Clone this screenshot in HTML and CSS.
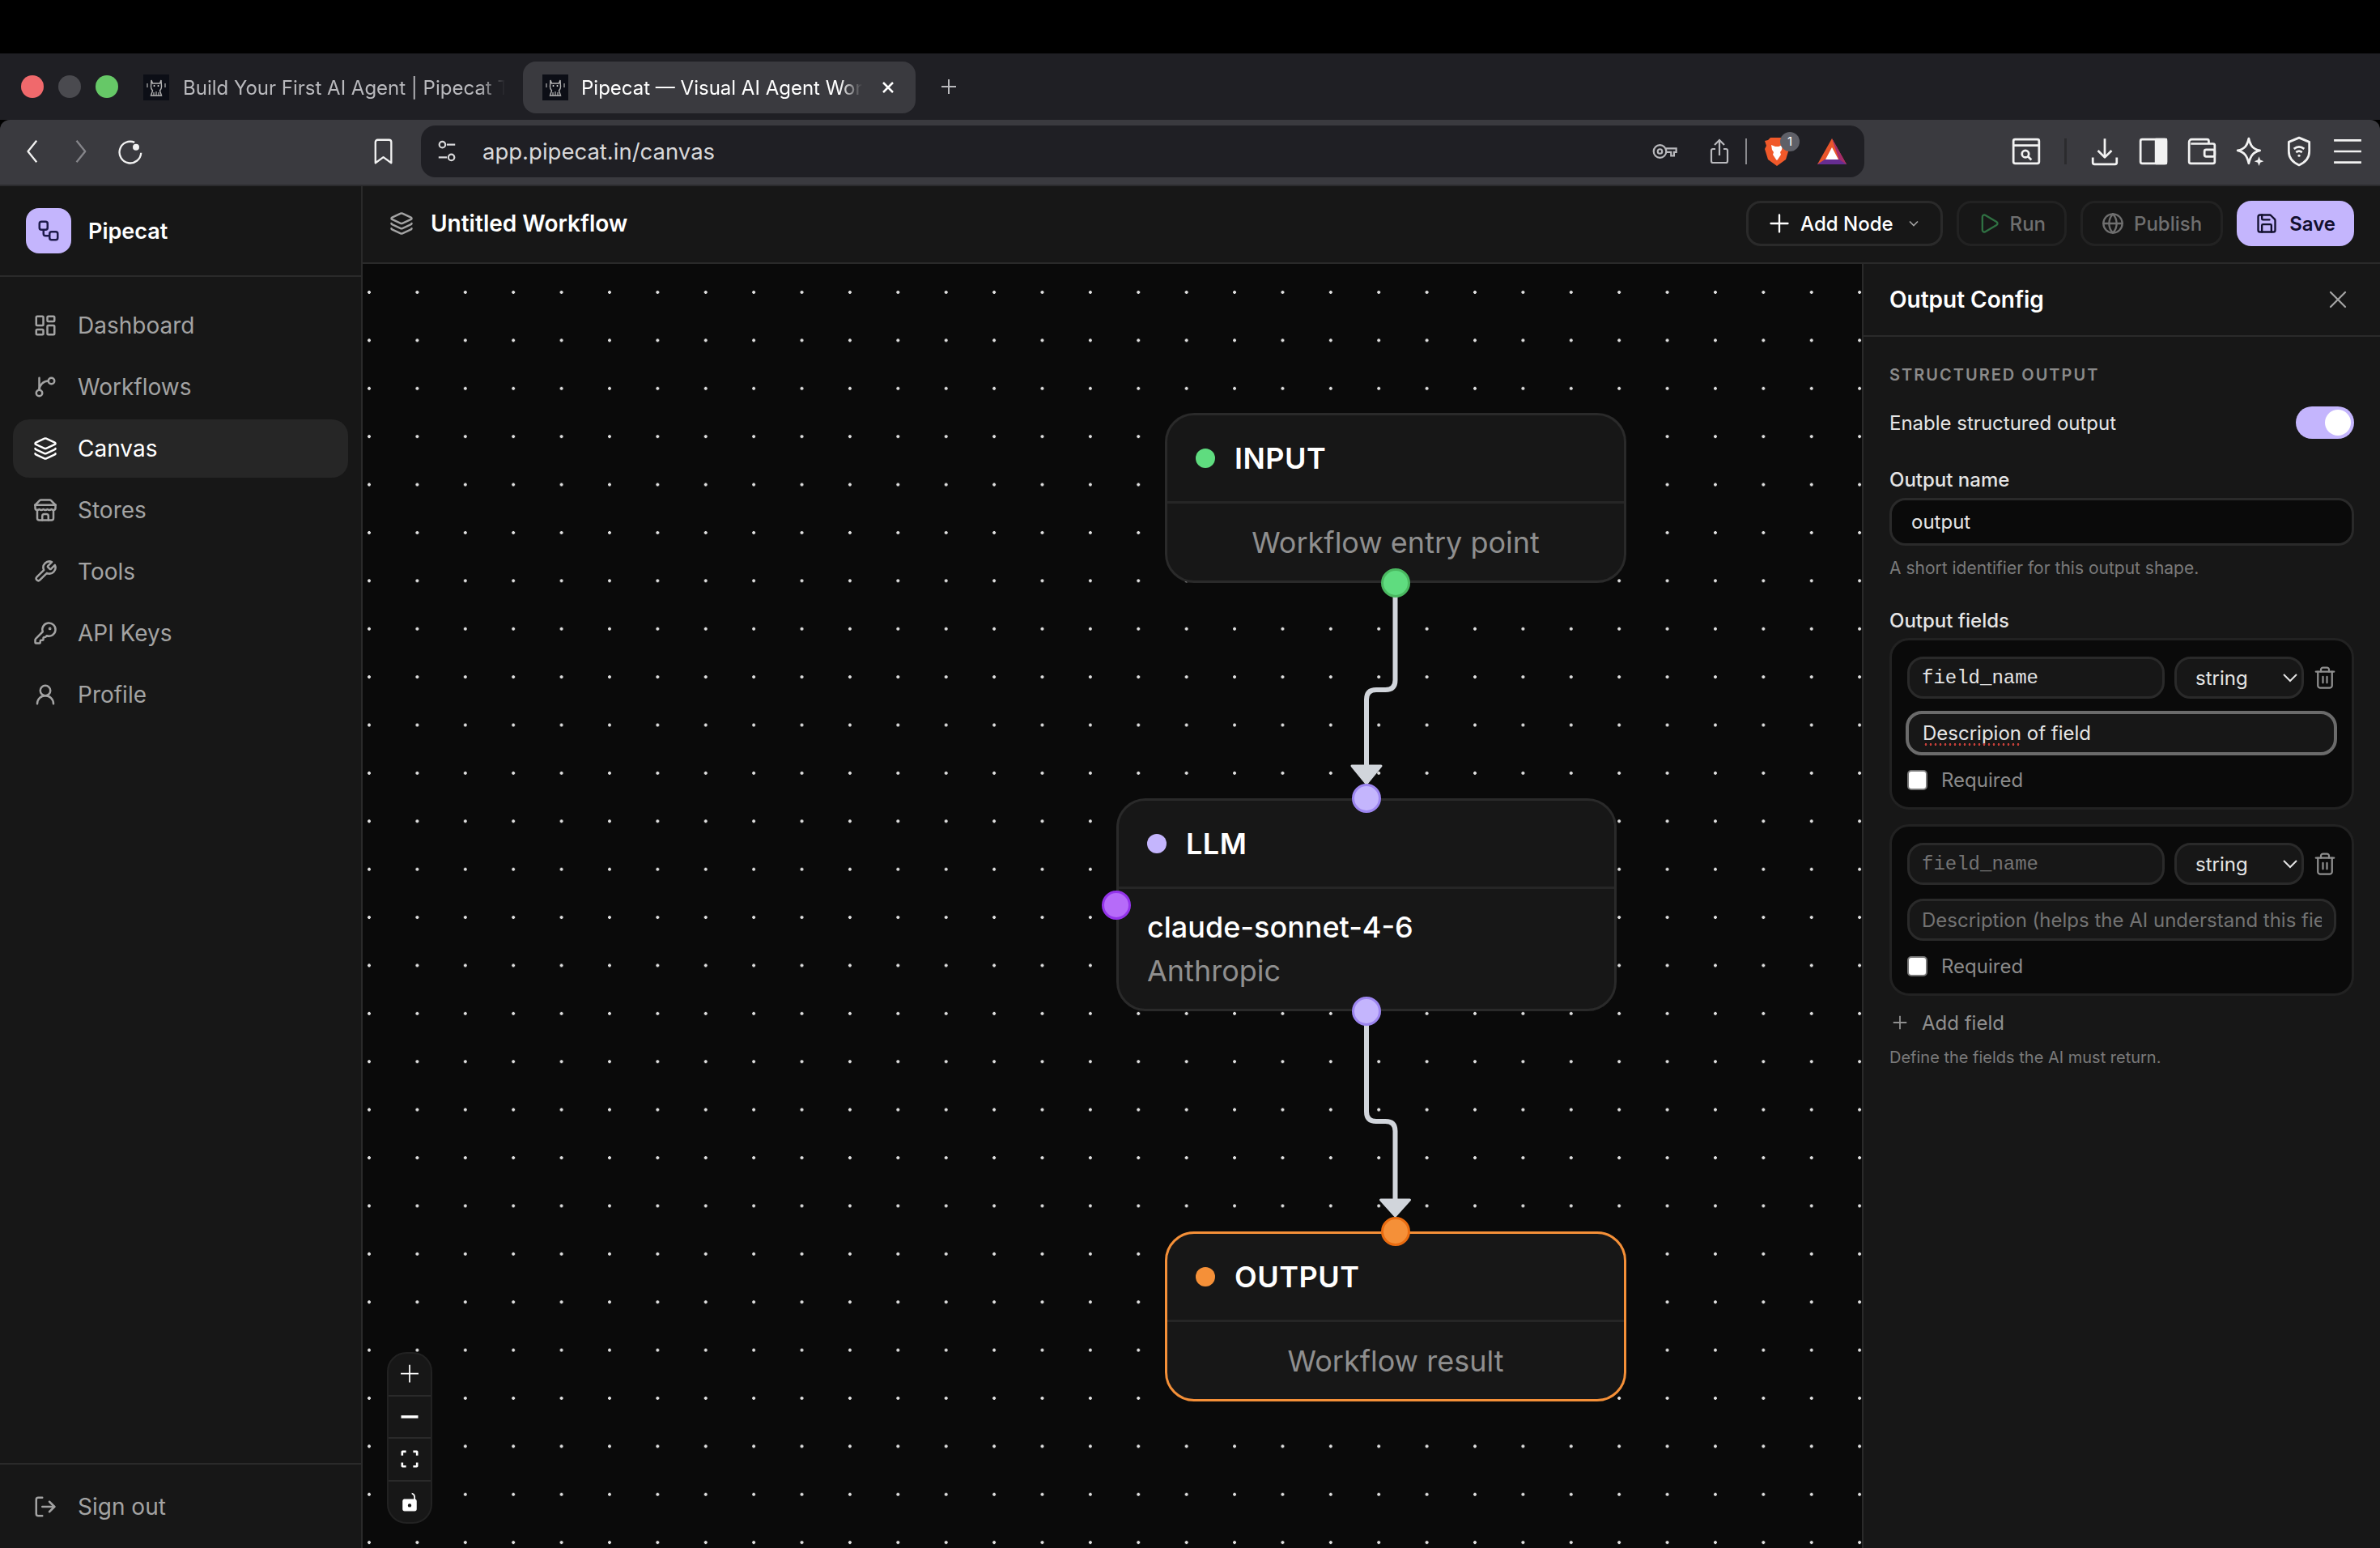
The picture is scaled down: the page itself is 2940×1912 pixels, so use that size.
FILE: index.html
```html
<!DOCTYPE html>
<html lang="en">
<head>
    <meta charset="UTF-8">
    <meta name="viewport" content="width=device-width, initial-scale=1.0">
    <title>Pipecat — Visual AI Agent Workflows</title>
    <link rel="stylesheet" href="styles.css">
</head>
<body>
    <div class="os-bar"></div>

    <div class="tabstrip">
        <div class="lights">
            <span class="light light-red"></span>
            <span class="light light-gray"></span>
            <span class="light light-green"></span>
        </div>
        <div class="tab">
            <svg class="favicon" viewBox="0 0 32 32"><rect width="32" height="32" fill="#0c0e16"/><path d="M10 7l1.500 4h9L22 7l.5 8c0 3-2 5-2 5l2 6h-13l2-6s-2-2-2-5z" fill="none" stroke="#b5b5b5" stroke-width="1.400"/><path d="M13 22v4M16 21v5M19 22v4M5 11v5M27 11v5" stroke="#b5b5b5" stroke-width="1.200"/><circle cx="13.500" cy="14" r="1" fill="#ddd"/><circle cx="18.500" cy="14" r="1" fill="#ddd"/></svg>
            <span class="tab-title tab-title-first">Build Your First AI Agent | Pipecat T</span>
        </div>
        <div class="tab tab-active">
            <svg class="favicon" viewBox="0 0 32 32"><rect width="32" height="32" fill="#0c0e16"/><path d="M10 7l1.500 4h9L22 7l.5 8c0 3-2 5-2 5l2 6h-13l2-6s-2-2-2-5z" fill="none" stroke="#b5b5b5" stroke-width="1.400"/><path d="M13 22v4M16 21v5M19 22v4M5 11v5M27 11v5" stroke="#b5b5b5" stroke-width="1.200"/><circle cx="13.500" cy="14" r="1" fill="#ddd"/><circle cx="18.500" cy="14" r="1" fill="#ddd"/></svg>
            <span class="tab-title tab-title-active">Pipecat — Visual AI Agent Wor</span>
            <svg class="tab-close" viewBox="0 0 20 20"><path d="M4 4l12 12M16 4L4 16"/></svg>
        </div>
        <svg class="new-tab" viewBox="0 0 24 24"><path d="M12 3v18M3 12h18"/></svg>
    </div>

    <div class="toolbar">
        <div class="tool-group">
            <button class="tool-btn"><svg viewBox="0 0 20 36"><path d="M16 3L4 18l12 15"/></svg></button>
            <button class="tool-btn tool-dim"><svg viewBox="0 0 20 36"><path d="M4 3l12 15L4 33"/></svg></button>
            <button class="tool-btn"><svg viewBox="0 0 36 36"><path d="M25 5.500a15 15 0 1 0 9 14.500"/><circle cx="27" cy="12" r="4.500" fill="#f2f2f2" stroke="none"/></svg></button>
            <button class="tool-btn tool-bookmark"><svg viewBox="0 0 26 36"><path d="M2 5a3 3 0 0 1 3-3h16a3 3 0 0 1 3 3v29l-11-8-11 8z"/></svg></button>
        </div>
        <div class="urlbar">
            <svg class="site-icon" viewBox="0 0 28 32"><circle cx="8" cy="7" r="4"/><path d="M14 7h11M3 24h11"/><circle cx="20" cy="24" r="4"/></svg>
            <span class="url">app.pipecat.in/canvas</span>
            <div class="url-icons">
                <svg class="icon-key" viewBox="0 0 34 24"><circle cx="11" cy="12" r="8.500"/><circle cx="11" cy="12" r="3"/><path d="M19 8h14v5h-3v5h-4v-5h-7"/></svg>
                <svg class="icon-share" viewBox="0 0 24 32"><path d="M12 21V2M6 8l6-6 6 6M7 13H4a2 2 0 0 0-2 2v13a2 2 0 0 0 2 2h16a2 2 0 0 0 2-2V15a2 2 0 0 0-2-2h-3"/></svg>
                <span class="url-sep"></span>
                <span class="brave">
                    <svg viewBox="0 0 32 36"><path d="M8 1h16l3 3 4 1-2 6 2 4-4 13-11 8-11-8L1 15l2-4-2-6 4-1z" fill="#f0592a"/><path d="M9 10l5 2h4l5-2-1 6-2 3 1 3-4 6-1 1-1-1-4-6 1-3-2-3z" fill="#fff"/></svg>
                    <span class="brave-badge">1</span>
                </span>
                <svg class="icon-bat" viewBox="0 0 36 32"><path d="M18 0L0 32h36z" fill="#e9562c"/><path d="M18 0l18 32-9-5z" fill="#a32b6c"/><path d="M0 32l9-6h18l9 6z" fill="#662d91"/><path d="M18 11l-8 15h16z" fill="#fff"/></svg>
            </div>
        </div>
        <div class="tool-group tool-right">
            <button class="tool-btn"><svg viewBox="0 0 36 36"><rect x="3" y="4" width="30" height="28" rx="2"/><path d="M3 11h30"/><circle cx="17" cy="21" r="4"/><path d="M20 24l4 4"/></svg></button>
            <span class="tool-sep"></span>
            <button class="tool-btn"><svg viewBox="0 0 36 36"><path d="M18 3v22M10 17l8 8 8-8M4 25v6a2 2 0 0 0 2 2h24a2 2 0 0 0 2-2v-6"/></svg></button>
            <button class="tool-btn"><svg viewBox="0 0 36 36"><rect x="3" y="4" width="30" height="28" rx="2"/><rect x="21" y="4" width="12" height="28" fill="#f2f2f2"/></svg></button>
            <button class="tool-btn"><svg viewBox="0 0 36 36"><path d="M26 9V6a2 2 0 0 0-2-2H6a3 3 0 0 0-3 3v23a2 2 0 0 0 2 2h26a2 2 0 0 0 2-2V11a2 2 0 0 0-2-2H5"/><rect x="21" y="16" width="12" height="8" rx="2"/></svg></button>
            <button class="tool-btn"><svg viewBox="0 0 36 36"><path d="M16 3c2 9 5 12 13 14-8 2-11 6-13 15-2-9-5-13-13-15 8-2 11-5 13-14z"/><path d="M28 24l1.500 4 4 1.500-4 1.500-1.500 4-1.500-4-4-1.500 4-1.500z" fill="#f2f2f2" stroke="none"/></svg></button>
            <button class="tool-btn"><svg viewBox="0 0 36 36"><path d="M18 2l12 5v11c0 8-5 13-12 16C11 31 6 26 6 18V7z"/><path d="M12 15c4-3 8-3 12 0M14.500 19c2-1.500 5-1.500 7 0"/><circle cx="18" cy="23" r="1.500" fill="#f2f2f2" stroke="none"/></svg></button>
            <button class="tool-btn"><svg viewBox="0 0 36 36"><path d="M2 5h32M2 18h32M2 31h32"/></svg></button>
        </div>
    </div>

    <div class="app">
        <aside class="sidebar">
            <div class="brand">
                <span class="brand-logo">
                    <svg viewBox="0 0 24 24"><rect x="3" y="3" width="8" height="8" rx="2"/><path d="M7 11v4a2 2 0 0 0 2 2h4"/><rect x="13" y="13" width="8" height="8" rx="2"/></svg>
                </span>
                <span class="brand-name">Pipecat</span>
            </div>
            <nav class="nav">
                <a class="nav-item">
                    <svg class="icon" viewBox="0 0 24 24"><rect x="3" y="3" width="7" height="9" rx="1"/><rect x="14" y="3" width="7" height="5" rx="1"/><rect x="14" y="12" width="7" height="9" rx="1"/><rect x="3" y="16" width="7" height="5" rx="1"/></svg>
                    Dashboard
                </a>
                <a class="nav-item">
                    <svg class="icon" viewBox="0 0 24 24"><path d="M6 3v12"/><circle cx="18" cy="6" r="3"/><circle cx="6" cy="18" r="3"/><path d="M15 6a9 9 0 0 0-9 9"/></svg>
                    Workflows
                </a>
                <a class="nav-item nav-active">
                    <svg class="icon" viewBox="0 0 24 24"><path d="M12.830 2.180a2 2 0 0 0-1.660 0L2.600 6.080a1 1 0 0 0 0 1.830l8.580 3.910a2 2 0 0 0 1.660 0l8.580-3.900a1 1 0 0 0 0-1.830z"/><path d="M2 12a1 1 0 0 0 .58.91l8.600 3.910a2 2 0 0 0 1.650 0l8.580-3.900A1 1 0 0 0 22 12"/><path d="M2 17a1 1 0 0 0 .58.91l8.600 3.910a2 2 0 0 0 1.650 0l8.580-3.900A1 1 0 0 0 22 17"/></svg>
                    Canvas
                </a>
                <a class="nav-item">
                    <svg class="icon" viewBox="0 0 24 24"><path d="m2 7 4.410-4.410A2 2 0 0 1 7.830 2h8.340a2 2 0 0 1 1.420.59L22 7"/><path d="M4 12v8a2 2 0 0 0 2 2h12a2 2 0 0 0 2-2v-8"/><path d="M15 22v-4a2 2 0 0 0-2-2h-2a2 2 0 0 0-2 2v4"/><path d="M2 7h20"/><path d="M22 7v3a2 2 0 0 1-2 2a2.700 2.700 0 0 1-1.590-.63.7.7 0 0 0-.82 0A2.700 2.700 0 0 1 16 12a2.700 2.700 0 0 1-1.590-.63.7.7 0 0 0-.82 0A2.700 2.700 0 0 1 12 12a2.700 2.700 0 0 1-1.590-.63.7.7 0 0 0-.82 0A2.700 2.700 0 0 1 8 12a2.700 2.700 0 0 1-1.590-.63.7.7 0 0 0-.82 0A2.700 2.700 0 0 1 4 12a2 2 0 0 1-2-2V7"/></svg>
                    Stores
                </a>
                <a class="nav-item">
                    <svg class="icon" viewBox="0 0 24 24"><path d="M14.700 6.300a1 1 0 0 0 0 1.400l1.600 1.600a1 1 0 0 0 1.400 0l3.770-3.770a6 6 0 0 1-7.940 7.940l-6.910 6.910a2.120 2.120 0 0 1-3-3l6.910-6.910a6 6 0 0 1 7.940-7.940l-3.760 3.760z"/></svg>
                    Tools
                </a>
                <a class="nav-item">
                    <svg class="icon" viewBox="0 0 24 24"><path d="M2.586 17.414A2 2 0 0 0 2 18.828V21a1 1 0 0 0 1 1h3a1 1 0 0 0 1-1v-1a1 1 0 0 1 1-1h1a1 1 0 0 0 1-1v-1a1 1 0 0 1 1-1h.172a2 2 0 0 0 1.414-.586l.814-.814a6.500 6.500 0 1 0-4-4z"/><circle cx="16.500" cy="7.500" r=".5" fill="currentColor"/></svg>
                    API Keys
                </a>
                <a class="nav-item">
                    <svg class="icon" viewBox="0 0 24 24"><circle cx="12" cy="8" r="5"/><path d="M20 21a8 8 0 0 0-16 0"/></svg>
                    Profile
                </a>
            </nav>
            <div class="signout">
                <a class="nav-item">
                    <svg class="icon" viewBox="0 0 24 24"><path d="M9 21H5a2 2 0 0 1-2-2V5a2 2 0 0 1 2-2h4"/><path d="m16 17 5-5-5-5"/><path d="M21 12H9"/></svg>
                    Sign out
                </a>
            </div>
        </aside>

        <main class="main">
            <header class="topbar">
                <svg class="icon topbar-icon" viewBox="0 0 24 24"><path d="M12.830 2.180a2 2 0 0 0-1.660 0L2.600 6.080a1 1 0 0 0 0 1.830l8.580 3.910a2 2 0 0 0 1.660 0l8.580-3.900a1 1 0 0 0 0-1.830z"/><path d="M2 12a1 1 0 0 0 .58.91l8.600 3.910a2 2 0 0 0 1.650 0l8.580-3.900A1 1 0 0 0 22 12"/><path d="M2 17a1 1 0 0 0 .58.91l8.600 3.910a2 2 0 0 0 1.650 0l8.580-3.900A1 1 0 0 0 22 17"/></svg>
                <h1 class="workflow-name">Untitled Workflow</h1>
                <div class="actions">
                    <button class="btn btn-add">
                        <svg class="btn-icon" viewBox="0 0 24 24"><path d="M12 3v18M3 12h18"/></svg>
                        Add Node
                        <svg class="btn-caret" viewBox="0 0 24 24"><path d="m6 9 6 6 6-6"/></svg>
                    </button>
                    <button class="btn btn-off">
                        <svg class="btn-icon btn-play" viewBox="0 0 24 24"><path d="M5 5a2 2 0 0 1 3.008-1.728l11.997 6.998a2 2 0 0 1 .003 3.458l-12 7A2 2 0 0 1 5 19z"/></svg>
                        Run
                    </button>
                    <button class="btn btn-off">
                        <svg class="btn-icon" viewBox="0 0 24 24"><circle cx="12" cy="12" r="10"/><path d="M12 2a14.500 14.500 0 0 0 0 20 14.500 14.500 0 0 0 0-20"/><path d="M2 12h20"/></svg>
                        Publish
                    </button>
                    <button class="btn btn-save">
                        <svg class="btn-icon" viewBox="0 0 24 24"><path d="M15.200 3a2 2 0 0 1 1.400.6l3.800 3.800a2 2 0 0 1 .6 1.400V19a2 2 0 0 1-2 2H5a2 2 0 0 1-2-2V5a2 2 0 0 1 2-2z"/><path d="M17 21v-7a1 1 0 0 0-1-1H8a1 1 0 0 0-1 1v7"/><path d="M7 3v4a1 1 0 0 0 1 1h7"/></svg>
                        Save
                    </button>
                </div>
            </header>

            <div class="workspace">
                <section class="canvas">
                    <svg class="wires" viewBox="0 0 1850 1586">
                        <path class="wire" d="M1275.500 394V514Q1275.500 526 1263.500 526H1252Q1240 526 1240 538V622"/>
                        <path class="arrow" d="M1222 620H1258L1240 642Z"/>
                        <path class="wire" d="M1240 924V1047Q1240 1059 1252 1059H1263.500Q1275.500 1059 1275.500 1071V1158"/>
                        <path class="arrow" d="M1257.500 1156H1293.500L1275.500 1176Z"/>
                    </svg>

                    <div class="node node-input">
                        <div class="node-head"><span class="node-dot dot-green"></span>INPUT</div>
                        <div class="node-body node-center">Workflow entry point</div>
                        <span class="handle handle-bottom handle-green"></span>
                    </div>

                    <div class="node node-llm">
                        <span class="handle handle-top handle-violet"></span>
                        <span class="handle handle-left handle-purple"></span>
                        <div class="node-head"><span class="node-dot dot-violet"></span>LLM</div>
                        <div class="node-body">
                            <div class="model">claude-sonnet-4-6</div>
                            <div>Anthropic</div>
                        </div>
                        <span class="handle handle-bottom handle-violet"></span>
                    </div>

                    <div class="node node-output">
                        <span class="handle handle-top handle-orange"></span>
                        <div class="node-head"><span class="node-dot dot-orange"></span>OUTPUT</div>
                        <div class="node-body node-center">Workflow result</div>
                    </div>

                    <div class="controls">
                        <button class="control"><svg viewBox="0 0 32 32"><path d="M15 3h2v11.500h11.500v2H17V28h-2V16.500H3.500v-2H15z"/></svg></button>
                        <button class="control"><svg viewBox="0 0 32 32"><path d="M4 14h24v4H4z"/></svg></button>
                        <button class="control"><svg viewBox="0 0 32 32"><path d="M4 11V6a2 2 0 0 1 2-2h5v3H7v4zM21 4h5a2 2 0 0 1 2 2v5h-3V7h-4zM28 21v5a2 2 0 0 1-2 2h-5v-3h4v-4zM11 28H6a2 2 0 0 1-2-2v-5h3v4h4z"/></svg></button>
                        <button class="control"><svg viewBox="0 0 32 32"><path fill-rule="evenodd" d="M8 12h14V9a4 4 0 0 0-3-3.800V3a6.500 6.500 0 0 1 5 6v3a3 3 0 0 1 2 3v11a3 3 0 0 1-3 3H9a3 3 0 0 1-3-3V15a3 3 0 0 1 2-3zm8 6.500a2.500 2.500 0 1 0 0 5 2.500 2.500 0 0 0 0-5z"/></svg></button>
                    </div>
                </section>

                <aside class="panel">
                    <div class="panel-head">
                        <h2 class="panel-title">Output Config</h2>
                        <svg class="panel-close" viewBox="0 0 24 24"><path d="M18 6 6 18M6 6l12 12"/></svg>
                    </div>
                    <div class="panel-body">
                        <div class="eyebrow">STRUCTURED OUTPUT</div>
                        <div class="switch-row">
                            <span>Enable structured output</span>
                            <span class="switch"><span class="switch-knob"></span></span>
                        </div>

                        <label class="label label-name" for="outputName">Output name</label>
                        <input class="input" id="outputName" type="text" value="output">
                        <p class="help help-name">A short identifier for this output shape.</p>

                        <div class="label label-fields">Output fields</div>

                        <div class="field-card">
                            <div class="field-row">
                                <input class="field-input mono" type="text" value="field_name" placeholder="field_name">
                                <span class="select-wrap">
                                    <select class="field-select"><option>string</option></select>
                                    <svg class="select-caret" viewBox="0 0 24 24"><path d="m4 8 8 8 8-8"/></svg>
                                </span>
                                <svg class="trash" viewBox="0 0 24 24"><path d="M3 6h18"/><path d="M19 6v14c0 1-1 2-2 2H7c-1 0-2-1-2-2V6"/><path d="M8 6V4c0-1 1-2 2-2h4c1 0 2 1 2 2v2"/><path d="M10 11v6M14 11v6"/></svg>
                            </div>
                            <div class="desc-wrap">
                                <input class="field-input desc desc-focus" type="text" value="Descripion of field">
                                <span class="spell"></span>
                            </div>
                            <label class="check"><input type="checkbox"> Required</label>
                        </div>

                        <div class="field-card">
                            <div class="field-row">
                                <input class="field-input mono" type="text" placeholder="field_name">
                                <span class="select-wrap">
                                    <select class="field-select"><option>string</option></select>
                                    <svg class="select-caret" viewBox="0 0 24 24"><path d="m4 8 8 8 8-8"/></svg>
                                </span>
                                <svg class="trash" viewBox="0 0 24 24"><path d="M3 6h18"/><path d="M19 6v14c0 1-1 2-2 2H7c-1 0-2-1-2-2V6"/><path d="M8 6V4c0-1 1-2 2-2h4c1 0 2 1 2 2v2"/><path d="M10 11v6M14 11v6"/></svg>
                            </div>
                            <div class="desc-wrap">
                                <input class="field-input desc" type="text" placeholder="Description (helps the AI understand this field)">
                            </div>
                            <label class="check"><input type="checkbox"> Required</label>
                        </div>

                        <button class="add-field">
                            <svg viewBox="0 0 24 24"><path d="M12 3v18M3 12h18"/></svg>
                            Add field
                        </button>
                        <p class="help help-fields">Define the fields the AI must return.</p>
                    </div>
                </aside>
            </div>
        </main>
    </div>
</body>
</html>
```

FILE: styles.css
```css
* {
    box-sizing: border-box;
}
html, body {
    height: 100%;
}
body {
    margin: 0;
    display: flex;
    flex-direction: column;
    overflow: hidden;
    background-color: black;
    color: white;
    font-family: Inter, "Noto Sans", sans-serif;
}
button, input, select {
    font-family: inherit;
}
svg {
    display: block;
    flex: none;
}

/* browser chrome */
.os-bar {
    height: 66px;
    background-color: black;
}
.tabstrip {
    height: 82px;
    display: flex;
    align-items: center;
    padding-left: 26px;
    background-color: #1f1f24;
}
.lights {
    display: flex;
    gap: 18px;
    width: 151px;
}
.light {
    width: 28px;
    height: 28px;
    border-radius: 50%;
}
.light-red { background-color: #f0696c; }
.light-gray { background-color: #4a4a4f; }
.light-green { background-color: #66c867; }
.tab {
    height: 64px;
    display: flex;
    align-items: center;
    gap: 17px;
    margin-top: 2px;
    color: #b9b9bd;
    font-size: 24px;
}
.tab-active {
    width: 485px;
    gap: 16px;
    margin-left: 22px;
    padding: 0 24px;
    border-radius: 16px;
    background-color: #3a3a3f;
    color: white;
}
.favicon {
    width: 32px;
    height: 32px;
}
.tab-title {
    white-space: nowrap;
    -webkit-mask-image: linear-gradient(to right, black 92%, transparent);
    mask-image: linear-gradient(to right, black 92%, transparent);
}
.tab-title-first { width: 398px; }
.tab-title-active { width: 347px; }
.tab-close {
    width: 20px;
    height: 20px;
    margin-left: 6px;
    fill: none;
    stroke: white;
    stroke-width: 2.5;
}
.new-tab {
    width: 24px;
    height: 24px;
    margin-left: 29px;
    fill: none;
    stroke: #b9b9bd;
    stroke-width: 2;
}
.toolbar {
    height: 82px;
    display: flex;
    align-items: center;
    padding: 0 10px 2px;
    border-radius: 12px 12px 0 0;
    border-bottom: 2px solid #2b2b2e;
    background-color: #3a3a3f;
}
.tool-group {
    display: flex;
    align-items: center;
}
.tool-right {
    margin-left: auto;
}
.tool-btn {
    width: 60px;
    height: 60px;
    display: flex;
    align-items: center;
    justify-content: center;
    padding: 0;
    border: none;
    background: none;
}
.tool-btn svg {
    height: 32px;
    fill: none;
    stroke: #f2f2f2;
    stroke-width: 2.6;
    stroke-linejoin: round;
}
.tool-right .tool-btn svg {
    height: 38px;
}
.tool-dim svg {
    stroke: #85858a;
}
.tool-bookmark {
    margin-left: 254px;
    margin-right: 16px;
}
.urlbar {
    width: 1783px;
    height: 64px;
    display: flex;
    align-items: center;
    border-radius: 18px;
    background-color: #1f1f24;
}
.site-icon {
    width: 26px;
    height: 30px;
    margin-left: 19px;
    fill: none;
    stroke: #d8d8da;
    stroke-width: 2.4;
}
.url {
    margin-left: 31px;
    color: #d8d8da;
    font-size: 27.5px;
}
.url-icons {
    display: flex;
    align-items: center;
    margin-left: auto;
    margin-right: 22px;
}
.icon-key {
    width: 32px;
    height: 22px;
    fill: none;
    stroke: #b9b9bd;
    stroke-width: 2.4;
}
.icon-share {
    width: 24px;
    height: 32px;
    margin-left: 40px;
    fill: none;
    stroke: #b9b9bd;
    stroke-width: 2.2;
}
.url-sep {
    width: 2px;
    height: 32px;
    margin-left: 20px;
    background-color: #8a8a8e;
}
.brave {
    position: relative;
    margin-left: 21px;
    width: 32px;
}
.brave svg {
    width: 32px;
    height: 36px;
}
.brave-badge {
    position: absolute;
    top: -6px;
    left: 20px;
    width: 24px;
    height: 24px;
    border-radius: 12px;
    background-color: #5f6068;
    font-size: 15px;
    line-height: 24px;
    text-align: center;
}
.icon-bat {
    width: 36px;
    height: 32px;
    margin-left: 34px;
}
.tool-sep {
    width: 3px;
    height: 32px;
    margin: 0 17px;
    background-color: #2b2b2e;
}

/* app shell */
.app {
    flex: 1;
    display: flex;
    min-height: 0;
    background-color: #171717;
}
.sidebar {
    width: 448px;
    display: flex;
    flex-direction: column;
    border-right: 2px solid #2a2a2a;
}
.brand {
    height: 112px;
    display: flex;
    align-items: center;
    gap: 21px;
    padding-left: 32px;
    border-bottom: 2px solid #2a2a2a;
}
.brand-logo {
    width: 56px;
    height: 56px;
    display: flex;
    align-items: center;
    justify-content: center;
    border-radius: 16px;
    background-color: #c4b5fd;
}
.brand-logo svg {
    width: 30px;
    height: 30px;
    fill: none;
    stroke: #1e1b4b;
    stroke-width: 2;
}
.brand-name {
    font-size: 27px;
    font-weight: 600;
}
.nav {
    flex: 1;
    display: flex;
    flex-direction: column;
    gap: 4px;
    padding: 24px 16px 0;
}
.nav-item {
    height: 72px;
    display: flex;
    align-items: center;
    gap: 25px;
    padding-left: 25px;
    border-radius: 20px;
    color: #a3a3a3;
    font-size: 28px;
}
.nav-active {
    background-color: #262626;
    color: white;
}
.icon {
    width: 30px;
    height: 30px;
    fill: none;
    stroke: currentColor;
    stroke-width: 2;
    stroke-linecap: round;
    stroke-linejoin: round;
}
.signout {
    height: 105px;
    padding: 16px 16px 0;
    border-top: 2px solid #2a2a2a;
}

/* main */
.main {
    flex: 1;
    min-width: 0;
    display: flex;
    flex-direction: column;
}
.topbar {
    height: 96px;
    display: flex;
    align-items: center;
    padding: 0 32px 0 33px;
    border-bottom: 2px solid #2a2a2a;
}
.topbar-icon {
    color: #a3a3a3;
    margin-top: -2px;
}
.workflow-name {
    margin: -2px 0 0 21px;
    font-size: 28px;
    font-weight: 600;
}
.actions {
    display: flex;
    gap: 17px;
    margin-left: auto;
    margin-top: -2px;
}
.btn {
    height: 56px;
    display: flex;
    align-items: center;
    gap: 12px;
    padding: 0 23px;
    border: 3px solid #2a2a2a;
    border-radius: 18px;
    background-color: #171717;
    color: white;
    font-size: 24px;
    font-weight: 500;
}
.btn-add {
    padding-left: 24px;
}
.btn-icon {
    width: 28px;
    height: 28px;
    fill: none;
    stroke: currentColor;
    stroke-width: 2;
    stroke-linecap: round;
    stroke-linejoin: round;
}
.btn-caret {
    width: 20px;
    height: 20px;
    margin-left: 3px;
    fill: none;
    stroke: #a3a3a3;
    stroke-width: 2;
}
.btn-off {
    border-color: #222222;
    color: #6f6f6f;
}
.btn-play {
    stroke: #2f7042;
}
.btn-save {
    gap: 14px;
    border: none;
    padding: 0 23px;
    background-color: #c4b5fd;
    color: #12102e;
    font-weight: 600;
}

.workspace {
    flex: 1;
    min-height: 0;
    display: flex;
}

/* canvas */
.canvas {
    position: relative;
    flex: 1;
    overflow: hidden;
    background-color: #0a0a0a;
    background-image: radial-gradient(circle, #e0e0e0 1.6px, transparent 2.2px);
    background-size: 59.4px 59.4px;
    background-position: -21.7px 5.3px;
}
.wires {
    position: absolute;
    top: 0;
    left: 0;
    width: 1850px;
    height: 1586px;
}
.wire {
    fill: none;
    stroke: #d1d5db;
    stroke-width: 6;
}
.arrow {
    fill: #d1d5db;
    stroke: #d1d5db;
    stroke-width: 3;
    stroke-linejoin: round;
}
.node {
    position: absolute;
    display: flex;
    flex-direction: column;
    border: 3px solid #2a2a2a;
    border-radius: 36px;
    background-color: #171717;
}
.node-input {
    left: 991px;
    top: 184px;
    width: 570px;
    height: 210px;
}
.node-llm {
    left: 931px;
    top: 660px;
    width: 618px;
    height: 263px;
}
.node-output {
    left: 991px;
    top: 1195px;
    width: 570px;
    height: 210px;
    border-color: #f59038;
}
.node-head {
    height: 109px;
    display: flex;
    align-items: center;
    gap: 24px;
    padding-left: 35px;
    border-bottom: 3px solid #262626;
    font-size: 36px;
    font-weight: 600;
    letter-spacing: 0.5px;
}
.node-dot {
    width: 24px;
    height: 24px;
    border-radius: 50%;
}
.dot-green { background-color: #5fdc7f; }
.dot-violet { background-color: #c4b5fd; }
.dot-orange { background-color: #f59038; }
.node-body {
    flex: 1;
    display: flex;
    flex-direction: column;
    justify-content: center;
    gap: 10px;
    padding: 0 35px;
    color: #8f8f8f;
    font-size: 36px;
}
.node-center {
    text-align: center;
}
.model {
    color: white;
    font-weight: 500;
}
.handle {
    position: absolute;
    width: 36px;
    height: 36px;
    border: 3px solid;
    border-radius: 50%;
}
.handle-top {
    top: -21px;
    left: calc(50% - 18px);
}
.handle-bottom {
    bottom: -21px;
    left: calc(50% - 18px);
}
.handle-left {
    top: calc(50% - 18px);
    left: -21px;
}
.handle-green {
    background-color: #5fdc7f;
    border-color: #4ab860;
}
.handle-violet {
    background-color: #c4b5fd;
    border-color: #9d86f0;
}
.handle-purple {
    background-color: #b66bf9;
    border-color: #9333ea;
}
.handle-orange {
    background-color: #f59038;
    border-color: #ea6c10;
}
.controls {
    position: absolute;
    left: 30px;
    bottom: 30px;
    width: 56px;
    height: 212px;
    display: flex;
    flex-direction: column;
    overflow: hidden;
    border: 2px solid #222222;
    border-radius: 24px;
    background-color: #171717;
}
.control {
    flex: 1;
    display: flex;
    align-items: center;
    justify-content: center;
    padding: 0;
    border: none;
    border-bottom: 2px solid #2a2a2a;
    background: none;
}
.control:last-child {
    border-bottom: none;
}
.control svg {
    width: 28px;
    height: 28px;
    fill: white;
}

/* config panel */
.panel {
    width: 640px;
    border-left: 2px solid #2a2a2a;
}
.panel-head {
    height: 90px;
    display: flex;
    align-items: center;
    justify-content: space-between;
    padding: 0 34px 0 32px;
    border-bottom: 2px solid #2a2a2a;
}
.panel-title {
    margin: 0;
    font-size: 28px;
    font-weight: 600;
}
.panel-close {
    width: 36px;
    height: 36px;
    fill: none;
    stroke: #a3a3a3;
    stroke-width: 1.5;
    stroke-linecap: round;
}
.panel-body {
    padding: 0 32px;
}
.eyebrow {
    margin-top: 35px;
    color: #8a8a8a;
    font-size: 20px;
    font-weight: 600;
    letter-spacing: 2px;
    line-height: 24px;
}
.switch-row {
    display: flex;
    align-items: center;
    justify-content: space-between;
    height: 40px;
    margin-top: 27px;
    color: #e5e5e5;
    font-size: 24px;
}
.switch {
    width: 72px;
    height: 40px;
    display: flex;
    align-items: center;
    justify-content: flex-end;
    padding: 4px;
    border-radius: 20px;
    background-color: #c4b5fd;
}
.switch-knob {
    width: 32px;
    height: 32px;
    border-radius: 50%;
    background-color: white;
}
.label {
    display: block;
    color: #e5e5e5;
    font-size: 24px;
    font-weight: 500;
    line-height: 32px;
}
.label-name {
    margin-top: 35px;
}
.input {
    width: 100%;
    height: 59px;
    margin-top: 6px;
    padding: 0 24px;
    border: 3px solid #2a2a2a;
    border-radius: 20px;
    background-color: #0a0a0a;
    color: #e5e5e5;
    font-size: 24px;
}
.help {
    margin: 0;
    color: #7a7a7a;
    line-height: 28px;
}
.help-name {
    margin-top: 14px;
    font-size: 21px;
}
.label-fields {
    margin-top: 35px;
}
.field-card {
    height: 212px;
    margin-top: 5px;
    padding: 20px 19px 0;
    border: 3px solid #222222;
    border-radius: 24px;
    background-color: #0a0a0a;
}
.field-card + .field-card {
    margin-top: 18px;
}
.field-row {
    display: flex;
    align-items: center;
    height: 52px;
}
.field-input {
    height: 52px;
    padding: 0 15px;
    border: 3px solid #2a2a2a;
    border-radius: 20px;
    background-color: #171717;
    color: #e5e5e5;
    font-size: 24px;
}
.field-input::placeholder {
    color: #737373;
}
.mono {
    width: 318px;
    font-family: "Liberation Mono", monospace;
}
.select-wrap {
    position: relative;
    margin-left: 12px;
}
.field-select {
    display: block;
    width: 160px;
    height: 52px;
    padding: 0 0 0 23px;
    border: 3px solid #2a2a2a;
    border-radius: 20px;
    background-color: #171717;
    color: #e5e5e5;
    font-size: 24px;
    appearance: none;
    -webkit-appearance: none;
}
.select-caret {
    position: absolute;
    top: 14px;
    right: 5px;
    width: 24px;
    height: 24px;
    fill: none;
    stroke: #e5e5e5;
    stroke-width: 2;
}
.trash {
    width: 30px;
    height: 30px;
    margin-left: 11px;
    fill: none;
    stroke: #8f8f8f;
    stroke-width: 1.8;
    stroke-linecap: round;
    stroke-linejoin: round;
}
.desc-wrap {
    position: relative;
    margin-top: 17px;
    height: 52px;
}
.desc {
    width: 530px;
}
.desc-focus {
    width: 533px;
    height: 55px;
    margin: -2px 0 0 -2px;
    padding-left: 17px;
    border: 4px solid #6b6b6b;
    outline: none;
}
.spell {
    position: absolute;
    top: 38px;
    left: 20px;
    width: 120px;
    height: 3px;
    background-image: radial-gradient(circle, #c8403a 1.2px, transparent 1.6px);
    background-size: 6px 3px;
}
.check {
    display: flex;
    align-items: center;
    gap: 17px;
    margin-top: 17px;
    color: #8a8a8a;
    font-size: 24px;
}
.check input {
    width: 25px;
    height: 25px;
    margin: 0;
    border: 2px solid #767676;
    border-radius: 5px;
    background-color: white;
    appearance: none;
    -webkit-appearance: none;
}
.add-field {
    display: flex;
    align-items: center;
    gap: 16px;
    margin-top: 17px;
    padding: 0 0 0 2px;
    height: 32px;
    border: none;
    background: none;
    color: #8f8f8f;
    font-size: 24px;
}
.add-field svg {
    width: 22px;
    height: 22px;
    fill: none;
    stroke: currentColor;
    stroke-width: 2;
}
.help-fields {
    margin-top: 13px;
    font-size: 20px;
}
```
